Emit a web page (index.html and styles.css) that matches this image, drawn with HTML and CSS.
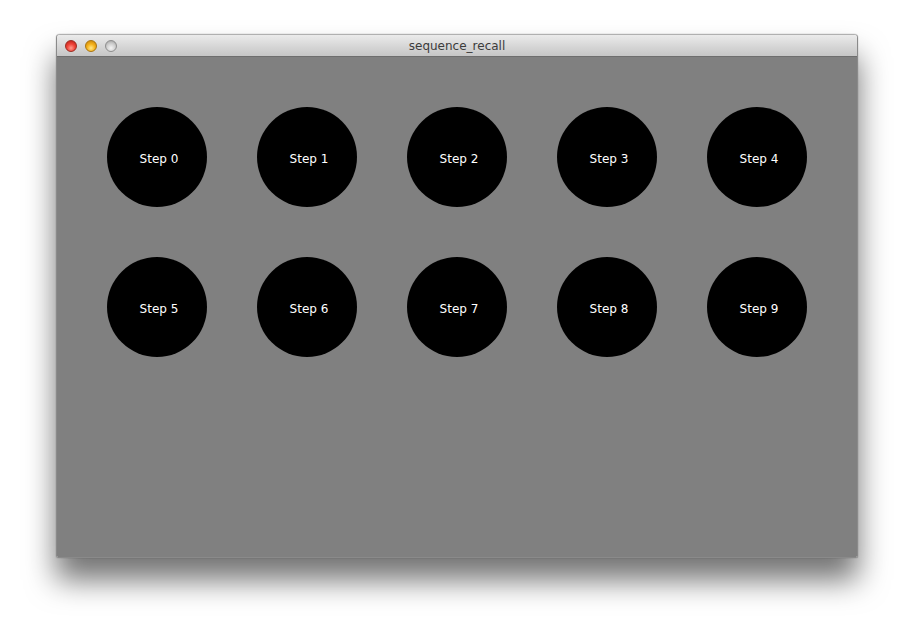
FILE: index.html
```
<!DOCTYPE html>
<html>
<head>
<meta charset="utf-8">
<link rel="stylesheet" href="styles.css">
</head>
<body>
<div class="window">
  <div class="titlebar">
    <div class="lights">
      <span class="light red"></span>
      <span class="light yellow"></span>
      <span class="light gray"></span>
    </div>
    <div class="title">sequence_recall</div>
  </div>
  <div class="content">
    <div class="grid">
      <div class="step">Step 0</div>
      <div class="step">Step 1</div>
      <div class="step">Step 2</div>
      <div class="step">Step 3</div>
      <div class="step">Step 4</div>
      <div class="step">Step 5</div>
      <div class="step">Step 6</div>
      <div class="step">Step 7</div>
      <div class="step">Step 8</div>
      <div class="step">Step 9</div>
    </div>
  </div>
</div>
</body>
</html>
```
FILE: styles.css
```
html, body {
  margin: 0;
  padding: 0;
  background: #ffffff;
  width: 914px;
  height: 636px;
  overflow: hidden;
}
body {
  padding-top: 34px;
  padding-left: 56px;
  box-sizing: border-box;
  font-family: "DejaVu Sans", "Liberation Sans", sans-serif;
}
.window {
  width: 802px;
  border-radius: 4px 4px 2px 2px;
  box-shadow: 0 22px 30px rgba(0,0,0,0.55), 0 0 1px rgba(0,0,0,0.5);
  overflow: hidden;
  border: 1px solid #8a8a8a;
  border-top-color: #b0b0b0;
  box-sizing: border-box;
}
.titlebar {
  height: 22px;
  background: linear-gradient(#ebebeb, #d4d4d4 60%, #c6c6c6);
  border-bottom: 1px solid #6e6e6e;
  box-sizing: border-box;
  display: flex;
  align-items: center;
  position: relative;
}
.lights {
  display: flex;
  gap: 8px;
  padding-left: 8px;
  align-items: center;
}
.light {
  width: 12px;
  height: 12px;
  border-radius: 50%;
  box-sizing: border-box;
}
.red {
  background: radial-gradient(circle at 50% 70%, #ff9c8e 0%, #f0453a 45%, #b51a12 100%);
  border: 1px solid #9b2b20;
}
.yellow {
  background: radial-gradient(circle at 50% 70%, #ffe88a 0%, #f6b31d 45%, #c07e07 100%);
  border: 1px solid #a9740e;
}
.gray {
  background: radial-gradient(circle at 50% 70%, #f4f4f4 0%, #cfcfcf 50%, #9b9b9b 100%);
  border: 1px solid #8e8e8e;
}
.title {
  position: absolute;
  left: 0;
  right: 0;
  top: 0;
  line-height: 22px;
  text-align: center;
  font-size: 12px;
  color: #3c3c3c;
  pointer-events: none;
}
.content {
  width: 800px;
  height: 500px;
  background: #808080;
  padding: 50px 0 0 50px;
  box-sizing: border-box;
}
.grid {
  display: grid;
  grid-template-columns: repeat(5, 100px);
  column-gap: 50px;
  row-gap: 50px;
}
.step {
  width: 100px;
  height: 100px;
  border-radius: 50%;
  background: #000000;
  color: #ffffff;
  font-size: 12px;
  display: flex;
  align-items: center;
  justify-content: center;
  padding: 4px 0 0 4px;
  box-sizing: border-box;
}
```
